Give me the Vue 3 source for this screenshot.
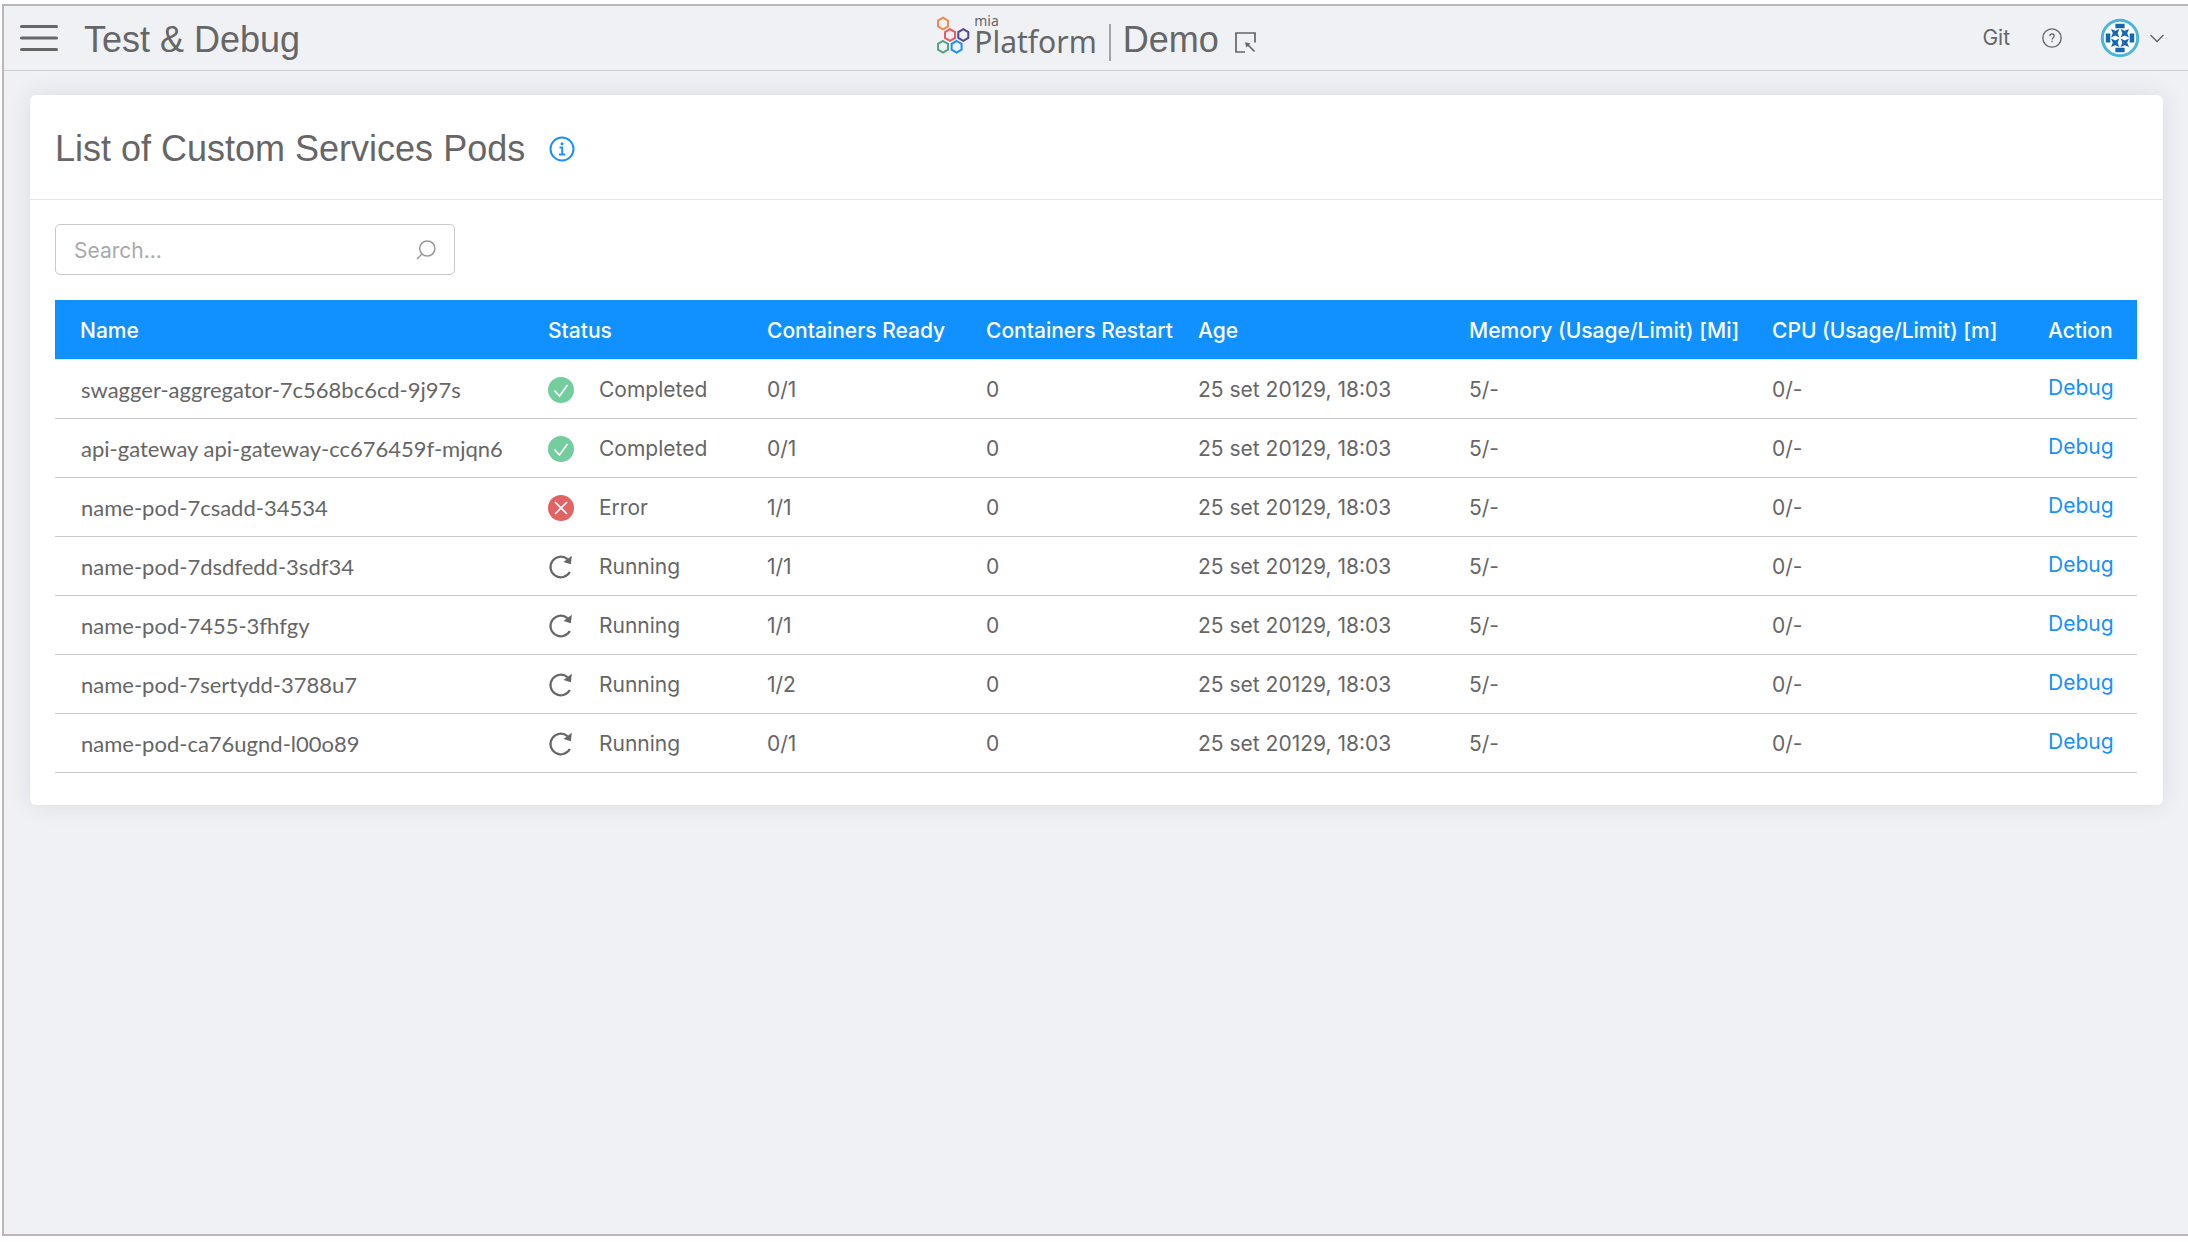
<script setup>
import { ref } from 'vue'

const query = ref('')

const columns = [
  { label: 'Name', width: 468 },
  { label: 'Status', width: 219 },
  { label: 'Containers Ready', width: 219 },
  { label: 'Containers Restart', width: 212 },
  { label: 'Age', width: 271 },
  { label: 'Memory (Usage/Limit) [Mi]', width: 303 },
  { label: 'CPU (Usage/Limit) [m]', width: 276 },
  { label: 'Action', width: 114 },
]

const age = '25 set 20129, 18:03'
const pods = [
  { name: 'swagger-aggregator-7c568bc6cd-9j97s', status: 'Completed', ready: '0/1' },
  { name: 'api-gateway api-gateway-cc676459f-mjqn6', status: 'Completed', ready: '0/1' },
  { name: 'name-pod-7csadd-34534', status: 'Error', ready: '1/1' },
  { name: 'name-pod-7dsdfedd-3sdf34', status: 'Running', ready: '1/1' },
  { name: 'name-pod-7455-3fhfgy', status: 'Running', ready: '1/1' },
  { name: 'name-pod-7sertydd-3788u7', status: 'Running', ready: '1/2' },
  { name: 'name-pod-ca76ugnd-l00o89', status: 'Running', ready: '0/1' },
]
</script>

<template>
  <div class="frame">
    <header class="topbar">
      <div class="left">
        <button class="icon-btn" type="button" aria-label="Menu">
          <svg width="38" height="28" viewBox="0 0 38 28" stroke="#666" stroke-width="3" stroke-linecap="round">
            <path d="M1.5 2.5h35M1.5 14h35M1.5 25.500h35" />
          </svg>
        </button>
        <h1>Test &amp; Debug</h1>
      </div>

      <div class="brand">
        <svg class="hexes" width="34" height="39" viewBox="0 0 34 39" fill="none" stroke-width="2">
          <path stroke="#f08c50" d="M7 1.700l5 2.900v5.800l-5 2.900-5-2.900V4.600z" />
          <path stroke="#ea5c62" d="M14 13.200l5 2.900v5.800l-5 2.900-5-2.900v-5.800z" />
          <path stroke="#5b4596" d="M27.300 13.200l5 2.900v5.800l-5 2.900-5-2.900v-5.800z" />
          <path stroke="#52a67c" d="M7 25l5 2.900v5.800l-5 2.900-5-2.900v-5.800z" />
          <path stroke="#1890ff" d="M20.600 25l5 2.900v5.800l-5 2.900-5-2.900v-5.800z" />
        </svg>
        <div class="wordmark">
          <span class="mia">mia</span>
          <span class="platform">Platform</span>
        </div>
        <span class="divider"></span>
        <span class="project">Demo</span>
        <button class="icon-btn picker" type="button" aria-label="Select project">
          <svg width="21" height="21" viewBox="0 0 21 21" fill="none" stroke="#666" stroke-width="1.700">
            <path d="M10 20H1V1h19v9.500M19.500 19.500l-8-8" />
            <path d="M10 10.200l5.500 1.200-4.200 4.200z" fill="#666" stroke="none" />
          </svg>
        </button>
      </div>

      <nav class="right">
        <a href="#git">Git</a>
        <button class="icon-btn help" type="button" aria-label="Help">
          <svg width="20" height="20" viewBox="0 0 20 20" fill="none" stroke="#666" stroke-width="1.300">
            <circle cx="10" cy="10" r="9.200" />
            <path d="M7.800 8.200c0-1.400 1-2.200 2.200-2.200s2.200.8 2.200 2c0 1.600-2.100 1.700-2.100 3.500" />
            <path d="M10.100 12.700v1.500" />
          </svg>
        </button>
        <button class="icon-btn account" type="button" aria-label="Account">
          <svg width="40" height="40" viewBox="0 0 40 40">
            <circle cx="20" cy="20" r="17.700" fill="#fff" stroke="#4bb6db" stroke-width="3" />
            <g fill="#1667b2">
              <path d="M15.400 5.800h9.200v4.500h-9.200zM15.400 29.700h9.200v4.500h-9.200zM5.800 15.400h4.500v9.200H5.800zM29.700 15.400h4.500v9.200h-4.500z" />
              <path d="M11 11l4.200 1.800 4.200-1.800-1.800 4.200 1.800 4.200-4.200-1.800-4.200 1.800 1.800-4.200z" />
              <path d="M20.600 11l4.200 1.800 4.200-1.800-1.800 4.200 1.800 4.200-4.200-1.800-4.200 1.800 1.800-4.200z" />
              <path d="M11 20.600l4.200 1.800 4.200-1.800-1.800 4.200 1.800 4.200-4.200-1.800-4.200 1.800 1.800-4.200z" />
              <path d="M20.600 20.600l4.200 1.800 4.200-1.800-1.800 4.200 1.800 4.200-4.200-1.800-4.200 1.800 1.800-4.200z" />
            </g>
          </svg>
          <svg width="14" height="9" viewBox="0 0 14 9" fill="none" stroke="#666" stroke-width="1.500">
            <path d="M.5 1L7 7.500 13.500 1" />
          </svg>
        </button>
      </nav>
    </header>

    <main class="card">
      <div class="card-head">
        <h2>List of Custom Services Pods</h2>
        <button class="icon-btn" type="button" aria-label="Information">
          <svg width="26" height="26" viewBox="0 0 26 26" fill="none" stroke="#1890ff" stroke-width="2">
            <circle cx="13" cy="13" r="11.500" />
            <path d="M10.500 11.500h2.700V18M10 18.500h6.300" stroke-width="1.900" />
            <circle cx="13" cy="7.800" r="1.500" fill="#1890ff" stroke="none" />
          </svg>
        </button>
      </div>

      <div class="card-body">
        <label class="search">
          <input v-model="query" type="text" placeholder="Search..." aria-label="Search" />
          <svg width="20" height="20" viewBox="0 0 20 20" fill="none" stroke="#999" stroke-width="1.500">
            <circle cx="11.300" cy="8.500" r="7.600" />
            <path d="M6 14L1 19" />
          </svg>
        </label>

        <table>
          <colgroup>
            <col v-for="c in columns" :key="c.label" :style="{ width: c.width + 'px' }" />
          </colgroup>
          <thead>
            <tr>
              <th v-for="c in columns" :key="c.label" scope="col">{{ c.label }}</th>
            </tr>
          </thead>
          <tbody>
            <tr v-for="pod in pods" :key="pod.name">
              <td class="name">{{ pod.name }}</td>
              <td>
                <div class="status">
                  <svg v-if="pod.status === 'Completed'" width="26" height="26" viewBox="0 0 26 26" fill="none" stroke="#fff" stroke-width="1.700">
                    <circle cx="13" cy="13" r="13" fill="#73cd9f" stroke="none" />
                    <path d="M6.500 13.500l5 5.500 8-11" />
                  </svg>
                  <svg v-else-if="pod.status === 'Error'" width="26" height="26" viewBox="0 0 26 26" fill="none" stroke="#fff" stroke-width="1.700">
                    <circle cx="13" cy="13" r="13" fill="#e26363" stroke="none" />
                    <path d="M7 7l12 12M19 7L7 19" />
                  </svg>
                  <svg v-else width="26" height="26" viewBox="0 0 26 26" fill="none" stroke="#666" stroke-width="2.200">
                    <path d="M19.500 5.200A10.300 10.300 0 1 0 21.800 18" />
                    <path d="M23.800 1.800l-.9 8.500-7.400-2.400z" fill="#666" stroke="none" />
                  </svg>
                  {{ pod.status }}
                </div>
              </td>
              <td>{{ pod.ready }}</td>
              <td>0</td>
              <td>{{ age }}</td>
              <td>5/-</td>
              <td>0/-</td>
              <td class="action"><a href="#debug">Debug</a></td>
            </tr>
          </tbody>
        </table>
      </div>
    </main>
  </div>
</template>

<style>
body {
  background: #fff;
}
</style>

<style scoped>
.frame {
  box-sizing: border-box;
  min-height: calc(100vh - 10px);
  margin: 4px 0 0 2px;
  border: 2px solid #bcb4b9;
  border-right: 0;
  background: #eff1f5;
  color: #666;
  font-family: Inter, "Liberation Sans", sans-serif;
  font-size: 21px;
  line-height: 26px;
}
h1,
h2,
.project {
  margin: 0;
  font-family: "Liberation Sans", Arial, sans-serif;
  font-size: 36px;
  line-height: 44px;
  font-weight: 400;
}
h1,
.project {
  padding-top: 4px;
}
a {
  color: inherit;
  text-decoration: none;
}
svg {
  display: block;
  flex: none;
}
.icon-btn {
  display: flex;
  align-items: center;
  padding: 0;
  border: 0;
  background: none;
  cursor: pointer;
}
.topbar {
  display: grid;
  grid-template-columns: 1fr auto 1fr;
  align-items: center;
  height: 64px;
  border-bottom: 1px solid #cdcdcf;
}
.left {
  display: flex;
  align-items: center;
  gap: 26px;
  padding-left: 16px;
}
.brand {
  display: flex;
  align-items: center;
}
.hexes,
.wordmark {
  margin-bottom: 6px;
}
.wordmark {
  display: flex;
  flex-direction: column;
  margin-left: 4px;
  font-family: "Noto Sans", "Open Sans", sans-serif;
}
.mia {
  font-size: 14px;
  line-height: 14px;
}
.platform {
  font-size: 30px;
  line-height: 28px;
}
.divider {
  width: 2px;
  height: 37px;
  margin: 8px 12px 0;
  background: #a3a3a5;
}
.picker {
  margin-left: 16px;
  padding-top: 8px;
}
.right {
  display: flex;
  justify-content: flex-end;
  align-items: center;
  padding-right: 24px;
}
.help {
  margin: 0 38px 0 32px;
}
.account {
  gap: 10px;
}
.card {
  margin: 24px 25px 0 26px;
  border-radius: 6px;
  background: #fff;
  box-shadow: 0 0 24px rgba(40, 40, 60, 0.1);
}
.card-head {
  box-sizing: border-box;
  display: flex;
  align-items: center;
  gap: 24px;
  height: 105px;
  padding: 4px 25px 0;
  border-bottom: 1px solid #e6e6e6;
}
.card-body {
  padding: 24px 26px 32px 25px;
}
.search {
  display: flex;
  align-items: center;
  box-sizing: border-box;
  width: 400px;
  height: 51px;
  margin-bottom: 25px;
  padding: 0 18px;
  border: 1px solid #c8c8c8;
  border-radius: 5px;
}
.search input {
  flex: 1;
  min-width: 0;
  padding: 2px 0 0;
  border: 0;
  outline: 0;
  background: none;
  color: #666;
  font: inherit;
}
.search input::placeholder {
  color: #aaa;
  opacity: 1;
}
table {
  width: 100%;
  table-layout: fixed;
  border-collapse: separate;
  border-spacing: 0;
}
th,
td {
  box-sizing: border-box;
  height: 59px;
  padding: 2px 0 0 25px;
  text-align: left;
  white-space: nowrap;
}
th {
  height: 60px;
  border-bottom: 1px solid #dde9f5;
  background: #1190ff;
  background-clip: padding-box;
  color: #fff;
  font-weight: 500;
}
td {
  border-bottom: 1px solid #cacaca;
}
.name {
  padding-left: 26px;
  font-family: Lato, "Open Sans", sans-serif;
  font-size: 22px;
}
.status {
  display: flex;
  align-items: center;
  gap: 25px;
}
.action {
  padding-bottom: 5px;
  color: #1890ff;
}
</style>
